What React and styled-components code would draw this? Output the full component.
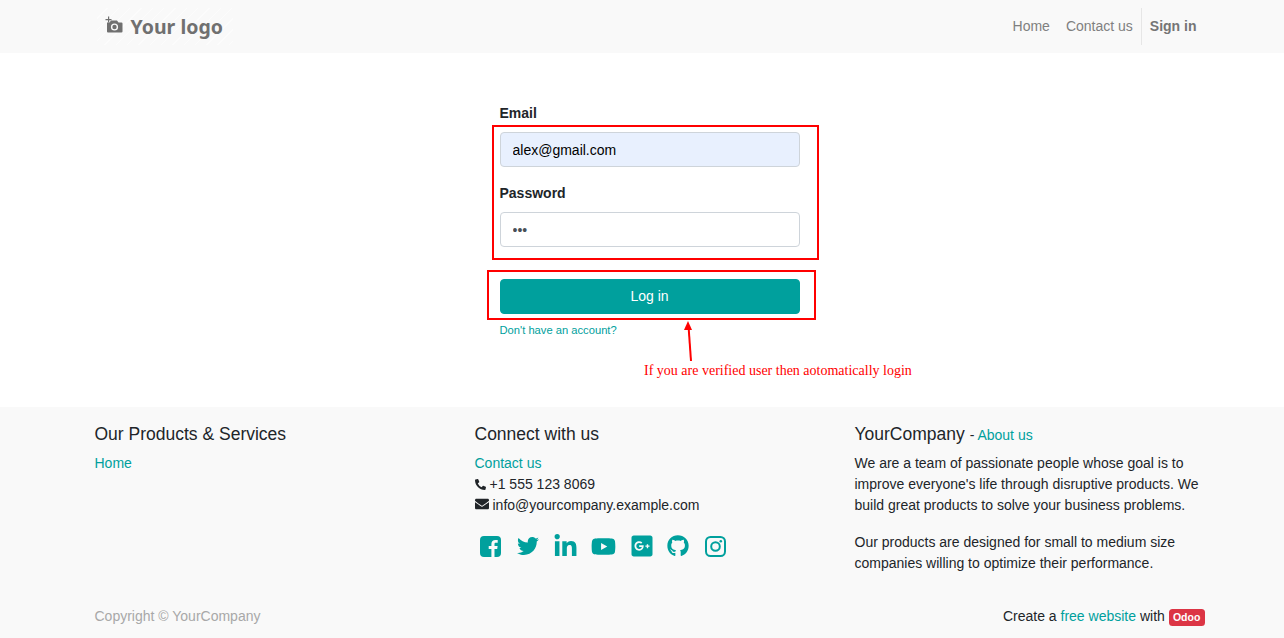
import React from "react";
import styled, { createGlobalStyle } from "styled-components";
import { FaPhoneAlt, FaEnvelope, FaTwitter, FaLinkedinIn, FaYoutube, FaGooglePlusSquare, FaGithub } from "react-icons/fa";

const Global = createGlobalStyle`
  html, body { margin: 0; padding: 0; background: #fff; overflow: hidden; }
  body { font-family: "Liberation Sans", Arial, sans-serif; font-size: 14px; line-height: 21px; color: #212529; }
  * { box-sizing: border-box; }
  a { color: #00a09d; text-decoration: none; }
`;

const Page = styled.div`
  position: relative;
  width: 1284px;
  height: 638px;
  overflow: hidden;
`;
const Header = styled.header`
  background: #f9f9f9;
  height: 53px;
  padding: 8px 0;
`;
const Container = styled.div`
  width: 1140px;
  margin-left: 79.5px;
  padding: 0 15px;
`;
const HeaderRow = styled(Container)`
  display: flex;
  align-items: center;
  justify-content: space-between;
`;
const Logo = styled.div`
  display: flex;
  align-items: center;
  gap: 8px;
  width: 136px;
  height: 37px;
  margin-left: 2px;
  padding-left: 8px;
  background: repeating-linear-gradient(135deg, #f9f9f9 0 7px, #fcfcfc 7px 8px);
`;
const CameraIcon = styled.svg`
  margin-top: -5px;
`;
const LogoText = styled.span`
  font-family: "Noto Sans", sans-serif;
  font-weight: 700;
  font-size: 19.500px;
  line-height: 37px;
  color: #707070;
`;
const Nav = styled.nav`
  display: flex;
  align-items: center;
`;
const NavLink = styled.a`
  padding: 8px;
  color: ${(p) => (p.$bold ? "#757575" : "#808080")};
  font-weight: ${(p) => (p.$bold ? 700 : 400)};
  ${(p) => p.$divided && "border-left: 1px solid #e6e6e6;"}
`;
const Main = styled.main`
  height: 354px;
  padding-top: 50px;
  display: flex;
  flex-direction: column;
  width: 300px;
  margin-left: 499.5px;
`;
const Label = styled.label`
  display: block;
  font-weight: 700;
  margin-bottom: 8px;
`;
const Field = styled.div`
  margin-bottom: 16px;
`;
const Input = styled.input`
  display: block;
  width: 100%;
  height: 35px;
  padding: 6px 12px;
  border: 1px solid #ced4da;
  border-radius: 4px;
  font: 14px/21px "Liberation Sans", Arial, sans-serif;
  color: ${(p) => (p.$filled ? "#000" : "#495057")};
  background: ${(p) => (p.$filled ? "#e8f0fe" : "#fff")};
  outline: none;
`;
const Submit = styled.button`
  display: block;
  width: 100%;
  height: 35px;
  margin-top: 16px;
  border: 1px solid #00a09d;
  border-radius: 4px;
  background: #00a09d;
  color: #fff;
  font: 14px/21px "Liberation Sans", Arial, sans-serif;
`;
const SmallLink = styled.a`
  display: block;
  margin-top: 7px;
  font-size: 11.200px;
  line-height: 19px;
`;
const Footer = styled.footer`
  background: #f9f9f9;
  height: 231px;
  padding-top: 17px;
`;
const Columns = styled.div`
  display: grid;
  grid-template-columns: 380px 380px 350px;
  height: 177px;
`;
const Heading = styled.h5`
  margin: 0 0 8px;
  font-size: 17.500px;
  font-weight: 500;
  line-height: 21px;
`;
const HeadingNote = styled.small`
  font-size: 14px;
  font-weight: 400;
  line-height: 0;
`;
const List = styled.ul`
  margin: 0;
  padding: 0;
  list-style: none;
`;
const ContactIcon = styled.span`
  display: inline-flex;
  vertical-align: -1px;
  margin-right: ${(p) => p.$gap}px;
  font-size: ${(p) => p.$size}px;
  color: #212529;
`;
const Socials = styled.div`
  display: flex;
  align-items: center;
  margin: 17px 0 0 -3px;
  height: 26px;
`;
const Social = styled.a`
  display: flex;
  justify-content: center;
  width: 37.500px;
  padding: ${(p) => p.$pad || "0"};
  font-size: ${(p) => p.$size || 24}px;
  color: #00a09d;
`;
const Para = styled.p`
  margin: 0 0 16px;
`;
const Bottom = styled.div`
  display: flex;
  justify-content: space-between;
  align-items: center;
  height: 21px;
  margin-top: 5px;
`;
const Copy = styled.span`
  color: #a8a8a8;
`;
const Badge = styled.span`
  display: inline-block;
  padding: 2.600px 4.200px;
  background: #dc3545;
  color: #fff;
  border-radius: 3.500px;
  font-size: 10.500px;
  font-weight: 700;
  line-height: 11px;
`;
const Callout = styled.div`
  position: absolute;
  left: ${(p) => p.$x}px;
  top: ${(p) => p.$y}px;
  width: ${(p) => p.$w}px;
  height: ${(p) => p.$h}px;
  border: 2px solid #f00;
  pointer-events: none;
`;
const Arrow = styled.svg`
  position: absolute;
  left: 680px;
  top: 318px;
`;
const Note = styled.div`
  position: absolute;
  left: 644px;
  top: 361px;
  font-family: "Liberation Serif", "Times New Roman", serif;
  font-size: 14px;
  line-height: 20px;
  color: #f00;
  white-space: nowrap;
`;

const FacebookGlyph = () => (
  <svg width="21" height="21" viewBox="0 0 21 21">
    <path
      fill="currentColor"
      fillRule="evenodd"
      d="M4 0h13a4 4 0 0 1 4 4v13a4 4 0 0 1-4 4h-2.500v-8h2.700l.4-3H14.500V8.200c0-.9.300-1.400 1.500-1.400h1.700V4.100c-.4-.1-1.300-.1-2.300-.1-2.400 0-4 1.400-4 4.100V10H8.700v3h2.700v8H4a4 4 0 0 1-4-4V4a4 4 0 0 1 4-4z"
    />
  </svg>
);

const InstagramGlyph = () => (
  <svg width="21" height="21" viewBox="0 0 21 21" fill="none" stroke="currentColor" strokeWidth="2">
    <rect x="1" y="1" width="19" height="19" rx="4.500" />
    <circle cx="10.500" cy="10.500" r="4.300" />
    <circle cx="15.800" cy="5.200" r="1.300" fill="currentColor" stroke="none" />
  </svg>
);

export default function App() {
  return (
    <Page>
      <Global />
      <Header>
        <HeaderRow>
          <Logo>
            <CameraIcon width="18" height="17" viewBox="0 0 18 17">
              <path fill="#707070" d="M2 6.500h2.500L6 4.500h6l1.500 2H16.500a1 1 0 0 1 1 1V15.500a1 1 0 0 1-1 1H3a1 1 0 0 1-1-1z" />
              <circle cx="9.500" cy="11" r="3.600" fill="#f9f9f9" />
              <circle cx="9.500" cy="11" r="2.200" fill="#707070" />
              <path fill="#707070" d="M3 0.500h1.200V3H6.500v1.200H4.200V6.500H3V4.200H0.500V3H3z" />
            </CameraIcon>
            <LogoText>Your logo</LogoText>
          </Logo>
          <Nav>
            <NavLink>Home</NavLink>
            <NavLink>Contact us</NavLink>
            <NavLink $bold $divided>Sign in</NavLink>
          </Nav>
        </HeaderRow>
      </Header>
      <Main>
        <Field>
          <Label>Email</Label>
          <Input $filled readOnly value="alex@gmail.com" />
        </Field>
        <Field>
          <Label>Password</Label>
          <Input type="password" readOnly value="abc" />
        </Field>
        <Submit>Log in</Submit>
        <SmallLink>Don't have an account?</SmallLink>
      </Main>
      <Footer>
        <Container>
          <Columns>
            <div>
              <Heading>Our Products &amp; Services</Heading>
              <List><li><a>Home</a></li></List>
            </div>
            <div>
              <Heading>Connect with us</Heading>
              <List>
                <li><a>Contact us</a></li>
                <li><ContactIcon $size={11} $gap={4}><FaPhoneAlt /></ContactIcon>+1 555 123 8069</li>
                <li><ContactIcon $size={14} $gap={4}><FaEnvelope /></ContactIcon>info@yourcompany.example.com</li>
              </List>
              <Socials>
                <Social $pad="0 0 0 1px"><FacebookGlyph /></Social>
                <Social $size={22} $pad="0 0 0 1px"><FaTwitter /></Social>
                <Social $size={25} $pad="1px 0 0 1px"><FaLinkedinIn /></Social>
                <Social $size={25} $pad="0 0 0 1px"><FaYoutube /></Social>
                <Social $pad="0 0 0 3px"><FaGooglePlusSquare /></Social>
                <Social $size={22} $pad="0 0 0 1px"><FaGithub /></Social>
                <Social><InstagramGlyph /></Social>
              </Socials>
            </div>
            <div>
              <Heading>YourCompany <HeadingNote>- <a>About us</a></HeadingNote></Heading>
              <Para>We are a team of passionate people whose goal is to improve everyone's life through disruptive products. We build great products to solve your business problems.</Para>
              <Para>Our products are designed for small to medium size companies willing to optimize their performance.</Para>
            </div>
          </Columns>
          <Bottom>
            <Copy>Copyright © YourCompany</Copy>
            <span>Create a <a>free website</a> with <Badge>Odoo</Badge></span>
          </Bottom>
        </Container>
      </Footer>
      <Callout $x={492} $y={125} $w={327} $h={135} />
      <Callout $x={487} $y={270} $w={329} $h={50} />
      <Arrow width="20" height="46" viewBox="0 0 20 46">
        <path d="M11 43 L8.500 8" stroke="#f00" strokeWidth="2" fill="none" />
        <path d="M8 3 L12 12 L4 12 Z" fill="#f00" />
      </Arrow>
      <Note>If you are verified user then aotomatically login</Note>
    </Page>
  );
}
